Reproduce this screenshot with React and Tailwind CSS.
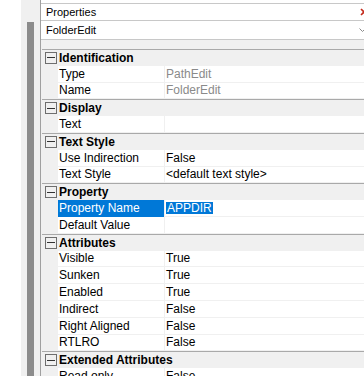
import React from "react";

const sections = [
  {
    title: "Identification",
    rows: [
      { name: "Type", value: "PathEdit", dim: true },
      { name: "Name", value: "FolderEdit", dim: true },
    ],
  },
  { title: "Display", rows: [{ name: "Text", value: "" }] },
  {
    title: "Text Style",
    rows: [
      { name: "Use Indirection", value: "False" },
      { name: "Text Style", value: "<default text style>" },
    ],
  },
  {
    title: "Property",
    rows: [
      { name: "Property Name", value: "APPDIR", selected: true },
      { name: "Default Value", value: "" },
    ],
  },
  {
    title: "Attributes",
    rows: [
      { name: "Visible", value: "True" },
      { name: "Sunken", value: "True" },
      { name: "Enabled", value: "True" },
      { name: "Indirect", value: "False" },
      { name: "Right Aligned", value: "False" },
      { name: "RTLRO", value: "False" },
    ],
  },
  {
    title: "Extended Attributes",
    rows: [{ name: "Read only", value: "False" }],
  },
];

function MinusBox() {
  return (
    <span className="w-[12px] h-[12px] border border-[#6e6e6e] flex items-center justify-center flex-none">
      <span className="w-[8px] h-px bg-[#333]" />
    </span>
  );
}

function SectionHeader({ title }) {
  return (
    <div className="h-[16.8px] flex-none flex items-center bg-[#f0f0f0] border-t border-[#a9a9a9] pl-[3px] gap-[2px]">
      <MinusBox />
      <span className="font-bold text-[12px] leading-none text-black">{title}</span>
    </div>
  );
}

function PropRow({ row }) {
  return (
    <div className="h-[16.8px] flex-none flex text-[12px] leading-none">
      <div className="w-[16px] flex-none bg-[#f0f0f0]" />
      <div
        className={
          "w-[106px] flex-none flex items-center pl-[1px] border-b " +
          (row.selected
            ? "bg-[#0078d7] text-white border-[#0078d7]"
            : "bg-white text-black border-[#f0f0f0]")
        }
      >
        {row.name}
      </div>
      <div
        className={
          "flex-1 flex items-center pl-[1px] bg-white border-l border-b border-[#f0f0f0] whitespace-nowrap " +
          (row.dim ? "text-[#8a8a8a]" : "text-black")
        }
      >
        {row.selected ? (
          <span className="bg-[#0078d7] text-white px-px">{row.value}</span>
        ) : (
          row.value
        )}
      </div>
    </div>
  );
}

export default function App() {
  return (
    <div className="w-[364px] h-[376px] flex bg-white overflow-hidden font-['Liberation_Sans',Arial,sans-serif]">
      <div className="w-[21px] flex-none bg-white" />
      <div className="w-[19px] flex-none bg-[#f0f0f0] pt-[22px] pl-[6px]">
        <div className="w-[7px] h-full bg-[#8c8c8c]" />
      </div>
      <div className="flex-1 flex flex-col pt-[3px] border-l border-[#a0a0a0] min-w-0">
        <div className="h-[18px] flex-none flex items-center justify-between border-t border-b border-[#c8c8c8] pl-[5px] bg-white text-[11px] text-black">
          <span>Properties</span>
          <svg width="6" height="8" viewBox="0 0 6 8" className="mr-[-2px]">
            <path d="M1 1 L7 7 M7 1 L1 7" stroke="#c42b1c" strokeWidth="1.6" />
          </svg>
        </div>
        <div className="h-[19px] flex-none flex items-center justify-between border-b border-[#c8c8c8] pl-[5px] bg-white text-[11px] text-black">
          <span>FolderEdit</span>
          <svg width="6" height="6" viewBox="0 0 6 6" className="mr-[-1px]">
            <path d="M0.5 1.5 L3.5 4.5 L6.5 1.5" stroke="#8a8a8a" strokeWidth="1" fill="none" />
          </svg>
        </div>
        <div className="h-[9px] flex-none bg-[#f0f0f0]" />
        <div className="flex-1 flex flex-col border-l border-[#f0f0f0]">
          {sections.map((s) => (
            <React.Fragment key={s.title}>
              <SectionHeader title={s.title} />
              {s.rows.map((r) => (
                <PropRow key={s.title + r.name} row={r} />
              ))}
            </React.Fragment>
          ))}
        </div>
      </div>
    </div>
  );
}
